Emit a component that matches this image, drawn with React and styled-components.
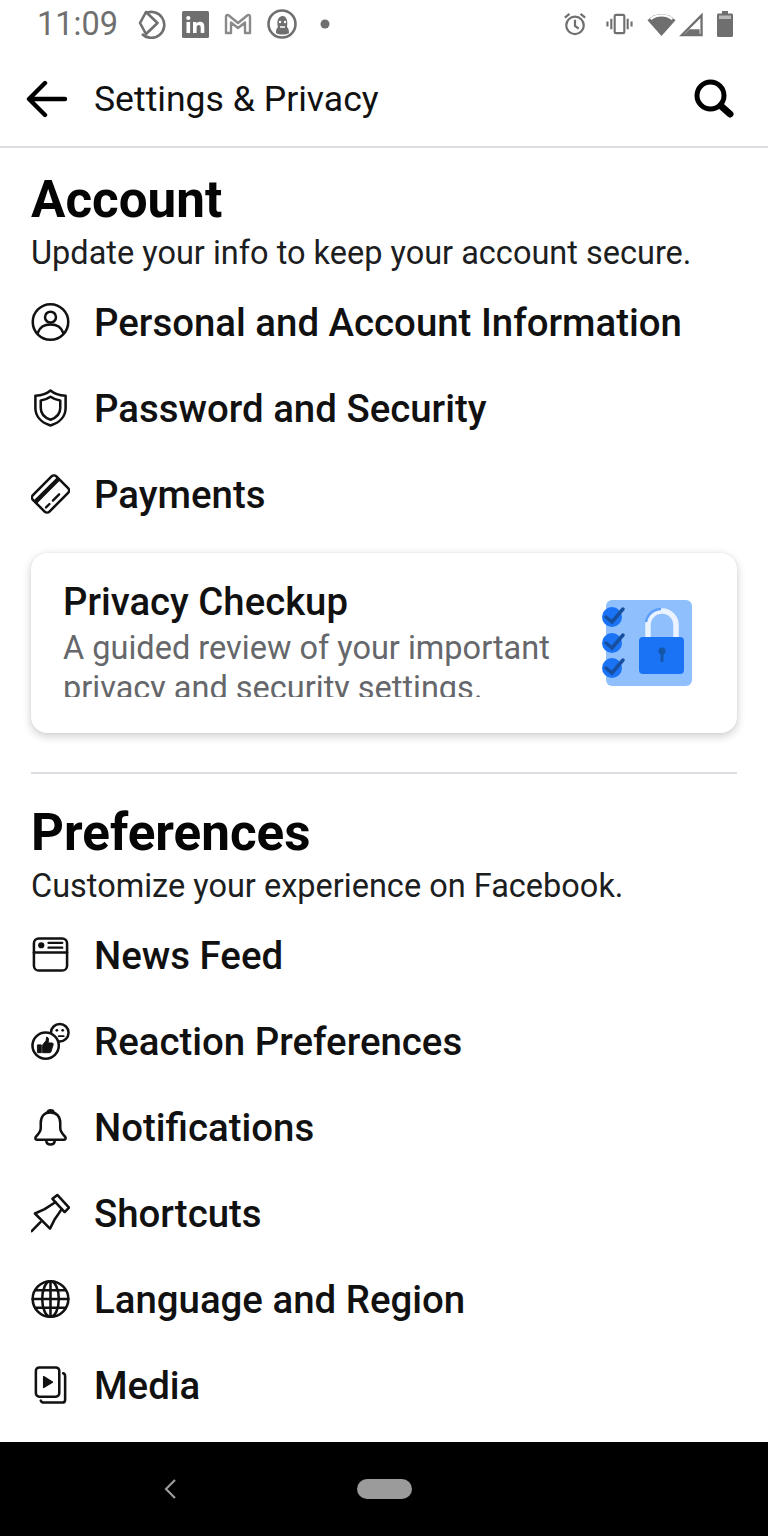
import React from "react";
import styled, { createGlobalStyle } from "styled-components";

const GlobalStyle = createGlobalStyle`
  html, body {
    margin: 0;
    padding: 0;
    background: #fff;
    font-family: Roboto, "Liberation Sans", sans-serif;
  }
`;

const Page = styled.div`
  width: 768px;
  height: 1536px;
  display: flex;
  flex-direction: column;
  overflow: hidden;
  background: #fff;
`;

const StatusBar = styled.div`
  height: 48px;
  box-sizing: border-box;
  padding: 0 35px 0 37px;
  display: flex;
  align-items: center;
  color: #6f6f6f;
  flex-shrink: 0;
`;

const Clock = styled.div`
  font-size: 32.5px;
  line-height: 48px;
  width: 100px;
`;

const StatusGroup = styled.div`
  display: flex;
  align-items: center;
  gap: ${(p) => p.$gap || 12}px;
  margin-left: ${(p) => p.$left || 0}px;
`;

const Spacer = styled.div`
  flex: 1;
`;

const Header = styled.div`
  height: 100px;
  flex-shrink: 0;
  box-sizing: border-box;
  border-bottom: 2px solid #dadde1;
  padding: 4px 33px 0 26px;
  display: flex;
  align-items: center;
`;

const HeaderTitle = styled.div`
  flex: 1;
  margin-left: 26px;
  font-size: 35.6px;
  color: #111;
`;

const Content = styled.div`
  flex: 1;
  padding: 0 31px;
  overflow: hidden;
`;

const SectionTitle = styled.h2`
  margin: ${(p) => p.$top}px 0 0;
  font-size: 51.2px;
  line-height: 57px;
  font-weight: 700;
  color: #050505;
`;

const SectionText = styled.p`
  margin: 0;
  font-size: 32.5px;
  line-height: 50px;
  color: #1c1e21;
`;

const Row = styled.div`
  height: 86px;
  display: flex;
  align-items: center;
  gap: 24px;
  font-size: 38.4px;
  font-weight: 500;
  color: #111;
`;

const RowIcon = styled.div`
  width: 39px;
  height: 40px;
  display: flex;
  align-items: center;
  justify-content: center;
  flex-shrink: 0;
`;

const Rows = styled.div`
  margin-top: 1px;
`;

const Card = styled.div`
  margin-top: 16px;
  height: 180px;
  box-sizing: border-box;
  padding: 27px 45px 36px 32px;
  border-radius: 16px;
  background: #fff;
  box-shadow: 0 3px 10px rgba(0, 0, 0, 0.2), 0 0 2px rgba(0, 0, 0, 0.08);
  display: flex;
  justify-content: space-between;
`;

const CardText = styled.div`
  width: 510px;
  overflow: hidden;
`;

const CardTitle = styled.div`
  font-size: 38.3px;
  line-height: 44px;
  font-weight: 500;
  color: #111;
`;

const CardBody = styled.div`
  margin-top: 4px;
  font-size: 32.5px;
  line-height: 40px;
  color: #65676b;
  height: 70px;
  overflow: hidden;
`;

const CardArt = styled.div`
  align-self: flex-start;
  margin-top: 20px;
  display: flex;
`;

const Divider = styled.div`
  height: 2px;
  margin-top: 39px;
  background: #dadde1;
`;

const NavBar = styled.div`
  height: 94px;
  flex-shrink: 0;
  background: #000;
  position: relative;
  display: flex;
  align-items: center;
  justify-content: center;
`;

const NavBack = styled.div`
  position: absolute;
  left: 163px;
  top: 37px;
  display: flex;
`;

const HomePill = styled.div`
  width: 55px;
  height: 20px;
  border-radius: 10px;
  background: #9b9b9b;
`;

const Stroke = ({ children }) => (
  <svg
    width="40"
    height="40"
    viewBox="0 0 40 40"
    fill="none"
    stroke="#111"
    strokeWidth="2.6"
    strokeLinecap="round"
    strokeLinejoin="round"
  >
    {children}
  </svg>
);

const PersonIcon = () => (
  <Stroke>
    <circle cx="20" cy="20" r="18.2" />
    <circle cx="20" cy="15" r="5.6" />
    <path d="M7 31c2-6 7-8.500 13-8.500s11 2.500 13 8.500" />
  </Stroke>
);

const ShieldIcon = () => (
  <Stroke>
    <path d="M20 2c4 3.500 9 5 15.500 5.500V20c0 8.500-6 15-15.500 18C10.500 35 4.500 28.500 4.500 20V7.500C11 7 16 5.500 20 2z" />
    <path d="M20 8.500c3 2.200 6 3.200 10 3.700V20c0 5.500-4 10-10 12-6-2-10-6.500-10-12v-7.800c4-.5 7-1.500 10-3.700z" />
  </Stroke>
);

const CardIcon = () => (
  <Stroke>
    <g transform="rotate(-45 20 20)">
      <rect x="3" y="8" width="34" height="24" rx="3.500" />
      <path d="M3 14.800h34" strokeWidth="4.500" strokeLinecap="butt" />
      <path d="M17 26.500h9M7 26.500h5" strokeWidth="2.400" />
    </g>
  </Stroke>
);

const FeedIcon = () => (
  <Stroke>
    <rect x="3" y="3" width="34" height="33" rx="5" />
    <path d="M3 17.500h34" />
    <circle cx="10.500" cy="10" r="3.200" fill="#111" stroke="none" />
    <path d="M18 7.500h14M18 12.500h14" strokeWidth="2.400" />
  </Stroke>
);

const ReactionIcon = () => (
  <Stroke>
    <circle cx="29.500" cy="11.500" r="9" />
    <circle cx="15" cy="24.700" r="13.500" fill="#fff" />
    <path d="M7 24h3.500v8H7z" fill="#111" strokeWidth="1" />
    <path d="M12 24l3.500-4.500.5-3.500c2 0 2.500 2.500 1.500 6h4.500c1 .5 1 2 0 4l-1.500 5c-.5 1-1 1-2 1H12z" fill="#111" strokeWidth="1" />
    <circle cx="26.500" cy="9" r="1.400" fill="#111" stroke="none" />
    <circle cx="32.500" cy="9" r="1.400" fill="#111" stroke="none" />
    <path d="M28.500 15h5" strokeWidth="2" />
  </Stroke>
);

const BellIcon = () => (
  <Stroke>
    <path d="M20 5c-6.500 0-10 4.500-10 11v5c0 4-2.500 6-5 9-1 1.500-.5 3 1 3h28c1.500 0 2-1.500 1-3-2.500-3-5-5-5-9v-5c0-6.500-3.500-11-10-11z" />
    <path d="M17 5c0-3 6-3 6 0" />
    <path d="M15.500 33.500c.5 6 8.500 6 9 0" />
  </Stroke>
);

const PinIcon = () => (
  <Stroke>
    <path d="M22 5.500 27 1.500 39 14.500 34.500 19z" />
    <path d="M25 9 14 16 4 20.500 19.500 36 24 27 31.500 16" />
    <path d="M9.700 29.300.7 38.700" />
  </Stroke>
);

const GlobeIcon = () => (
  <Stroke>
    <circle cx="20" cy="20" r="18.300" />
    <ellipse cx="20" cy="20" rx="8.500" ry="18.300" />
    <path d="M20 1.700v36.600M1.700 20h36.600M4.500 11h31M4.500 29h31" />
  </Stroke>
);

const MediaIcon = () => (
  <Stroke>
    <rect x="5" y="2" width="24" height="30" rx="3.500" />
    <path d="M13 11.500v11l9-5.500z" fill="#111" strokeWidth="1.500" />
    <path d="M33 8c1.500.5 2 1.500 2 3v24c0 2-1 3-3 3H13c-1.500 0-2.500-.5-3-2" />
  </Stroke>
);

const AppArrowIcon = () => (
  <svg width="30" height="30" viewBox="0 0 30 30" fill="none" stroke="#6f6f6f" strokeWidth="2.600">
    <path d="M8 4.500A13 13 0 1 1 5 25" />
    <path d="M9 3 20.500 14 9 25 3 14z" strokeLinejoin="round" />
  </svg>
);

const LinkedInIcon = () => (
  <svg width="27" height="27" viewBox="0 0 27 27">
    <rect width="27" height="27" rx="1.500" fill="#6f6f6f" />
    <rect x="4.500" y="11" width="3.600" height="11" fill="#fff" />
    <circle cx="6.300" cy="7" r="2.100" fill="#fff" />
    <path d="M11 11h3.400v1.600c1-1.400 2.200-1.900 3.600-1.900 3 0 4.300 1.800 4.300 5V22h-3.600v-5.600c0-1.600-.6-2.500-1.900-2.500-1.500 0-2.200 1-2.200 2.600V22H11z" fill="#fff" />
  </svg>
);

const GmailIcon = () => (
  <svg width="28" height="22" viewBox="0 0 28 22" fill="none" stroke="#8a8a8a" strokeWidth="2.400" strokeLinejoin="round">
    <path d="M2 20V3.500c0-1.500 1.500-2 2.500-1.200L14 10l9.500-7.700c1-.8 2.500-.3 2.500 1.200V20h-5V9.500L14 15 7 9.500V20z" />
  </svg>
);

const AvatarIcon = () => (
  <svg width="30" height="30" viewBox="0 0 30 30">
    <circle cx="15" cy="15" r="13.500" fill="#fff" stroke="#6f6f6f" strokeWidth="2.600" />
    <path d="M9 24c0-4 1-5 2-6-1-3-1.500-10 4-11 5-.5 6 6 5 11 1 1 2 2 2 6-3 2-10 2-13 0z" fill="#6f6f6f" />
    <circle cx="13" cy="13" r="1.200" fill="#fff" />
    <circle cx="18" cy="13" r="1.200" fill="#fff" />
    <path d="M13 18h5" stroke="#fff" strokeWidth="1.500" />
  </svg>
);

const Dot = () => (
  <svg width="10" height="10" viewBox="0 0 10 10">
    <circle cx="5" cy="5" r="4.500" fill="#6f6f6f" />
  </svg>
);

const AlarmIcon = () => (
  <svg width="24" height="26" viewBox="0 0 26 26" fill="none" stroke="#6f6f6f" strokeWidth="2.400">
    <circle cx="13" cy="14.500" r="9.500" />
    <path d="M13 8.500v6.500l4 3" />
    <path d="M2 6l5-4M24 6l-5-4" />
  </svg>
);

const VibrateIcon = () => (
  <svg width="27" height="22" viewBox="0 0 28 22" fill="none" stroke="#6f6f6f" strokeWidth="2.200">
    <rect x="9" y="1.500" width="10" height="19" rx="1.500" />
    <path d="M5.500 5.500v11M1.500 8.500v5M22.500 5.500v11M26.500 8.500v5" />
  </svg>
);

const WifiIcon = () => (
  <svg width="29" height="25" viewBox="0 0 30 25">
    <path d="M15 24.500.5 8C9-.5 21-.5 29.500 8z" fill="#6f6f6f" />
    <path d="M4.500 7.800C10.500 3 19.500 3 25.500 7.800L27 6.300C20 .5 10 .5 3 6.300z" fill="#fff" />
  </svg>
);

const SignalIcon = () => (
  <svg width="24" height="25" viewBox="0 0 25 25" fill="none" stroke="#6f6f6f" strokeWidth="2.400">
    <path d="M23.500 3v20.500H3z" />
    <path d="M11 17.500h10.500v5H6z" fill="#6f6f6f" stroke="none" />
  </svg>
);

const BatteryIcon = () => (
  <svg width="16" height="26" viewBox="0 0 16 26">
    <path d="M5 0h6v2.500h3.500c.8 0 1.500.7 1.500 1.500v20.500c0 .8-.7 1.500-1.500 1.500h-13C.7 26 0 25.300 0 24.500V4c0-.8.700-1.500 1.500-1.500H5z" fill="#6f6f6f" />
    <rect x="2" y="4.500" width="12" height="3.500" fill="#b9b9b9" />
  </svg>
);

const BackArrow = () => (
  <svg width="42" height="38" viewBox="0 0 42 38" fill="none" stroke="#000" strokeWidth="4.400" strokeLinecap="round" strokeLinejoin="round">
    <path d="M39 19H4M19 3 3 19l16 16" />
  </svg>
);

const SearchIcon = () => (
  <svg width="42" height="42" viewBox="0 0 42 42" fill="none" stroke="#000">
    <circle cx="17.500" cy="17.500" r="13.500" strokeWidth="5" />
    <path d="M28 28l9 8" strokeWidth="7" strokeLinecap="round" />
  </svg>
);

const PrivacyArt = () => (
  <svg width="90" height="86" viewBox="0 0 90 86" overflow="visible">
    <rect x="4" y="0" width="86" height="86" rx="6" fill="#8fbffd" />
    <path d="M46 37V25a14 14 0 0 1 28 0V37" fill="none" stroke="#eaf3ff" strokeWidth="5.500" />
    <path d="M44 22a15.500 15.500 0 0 1 15-13" fill="none" stroke="#5ea0fb" strokeWidth="2.500" />
    <rect x="37" y="37" width="45" height="37" rx="4" fill="#1a73f5" />
    <circle cx="60" cy="51" r="3.600" fill="#1456a8" />
    <rect x="58.500" y="51" width="3" height="11" rx="1.500" fill="#1456a8" />
    {[17, 43, 68].map((cy) => (
      <g key={cy}>
        <circle cx="10" cy={cy} r="10" fill="#1a73f5" />
        <path d={`M4 ${cy}l6 5 11-13`} fill="none" stroke="#174f9e" strokeWidth="3.500" strokeLinecap="round" />
      </g>
    ))}
  </svg>
);

const accountRows = [
  { label: "Personal and Account Information", Icon: PersonIcon },
  { label: "Password and Security", Icon: ShieldIcon },
  { label: "Payments", Icon: CardIcon },
];

const preferenceRows = [
  { label: "News Feed", Icon: FeedIcon },
  { label: "Reaction Preferences", Icon: ReactionIcon },
  { label: "Notifications", Icon: BellIcon },
  { label: "Shortcuts", Icon: PinIcon },
  { label: "Language and Region", Icon: GlobeIcon },
  { label: "Media", Icon: MediaIcon },
];

const SettingRow = ({ label, Icon }) => (
  <Row>
    <RowIcon>
      <Icon />
    </RowIcon>
    {label}
  </Row>
);

export default function App() {
  return (
    <Page>
      <GlobalStyle />
      <StatusBar>
        <Clock>11:09</Clock>
        <StatusGroup $gap={15}>
          <AppArrowIcon />
          <LinkedInIcon />
          <GmailIcon />
          <AvatarIcon />
        </StatusGroup>
        <StatusGroup $left={23}>
          <Dot />
        </StatusGroup>
        <Spacer />
        <StatusGroup $gap={14}>
          <StatusGroup $gap={19}>
            <AlarmIcon />
            <VibrateIcon />
          </StatusGroup>
          <StatusGroup $gap={3}>
            <WifiIcon />
            <SignalIcon />
          </StatusGroup>
          <BatteryIcon />
        </StatusGroup>
      </StatusBar>
      <Header>
        <BackArrow />
        <HeaderTitle>Settings &amp; Privacy</HeaderTitle>
        <SearchIcon />
      </Header>
      <Content>
        <SectionTitle $top={23}>Account</SectionTitle>
        <SectionText>Update your info to keep your account secure.</SectionText>
        <Rows>
          {accountRows.map((r) => (
            <SettingRow key={r.label} {...r} />
          ))}
        </Rows>
        <Card>
          <CardText>
            <CardTitle>Privacy Checkup</CardTitle>
            <CardBody>
              A guided review of your important privacy and security settings.
            </CardBody>
          </CardText>
          <CardArt>
            <PrivacyArt />
          </CardArt>
        </Card>
        <Divider />
        <SectionTitle $top={30}>Preferences</SectionTitle>
        <SectionText>Customize your experience on Facebook.</SectionText>
        <Rows>
          {preferenceRows.map((r) => (
            <SettingRow key={r.label} {...r} />
          ))}
        </Rows>
      </Content>
      <NavBar>
        <NavBack>
          <svg width="14" height="20" viewBox="0 0 14 20" fill="none" stroke="#9b9b9b" strokeWidth="2.200">
            <path d="M12 1 3 10l9 9" />
          </svg>
        </NavBack>
        <HomePill />
      </NavBar>
    </Page>
  );
}
